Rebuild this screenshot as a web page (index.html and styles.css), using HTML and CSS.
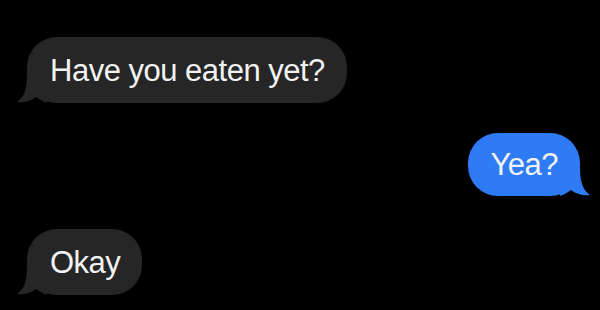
FILE: index.html
```html
<!DOCTYPE html>
<html lang="en">
<head>
    <meta charset="UTF-8">
    <meta name="viewport" content="width=device-width, initial-scale=1.0">
    <title>Messages</title>
    <link rel="stylesheet" href="styles.css">
</head>
<body>
    <div class="thread">
        <div class="bubble received">
            Have you eaten yet?
            <svg class="tail" viewBox="0 0 30 28"><path d="M10,0 C10,14 7,22 0,27 C7,28 14,26 19,22 C23,25 27,27 30,28 L30,0 Z"/></svg>
        </div>
        <div class="bubble sent">
            Yea?
            <svg class="tail" viewBox="0 0 30 28"><path d="M10,0 C10,14 7,22 0,27 C7,28 14,26 19,22 C23,25 27,27 30,28 L30,0 Z"/></svg>
        </div>
        <div class="bubble received last">
            Okay
            <svg class="tail" viewBox="0 0 30 28"><path d="M10,0 C10,14 7,22 0,27 C7,28 14,26 19,22 C23,25 27,27 30,28 L30,0 Z"/></svg>
        </div>
    </div>
</body>
</html>
```
FILE: styles.css
```css
body {
    margin: 0;
    padding: 0;
    background-color: #000;
    font-family: "Liberation Sans", Arial, sans-serif;
    height: 310px;
    overflow: hidden;
}

.thread {
    display: flex;
    flex-direction: column;
    gap: 30px;
    padding: 37px 20px 0 27px;
}

.bubble {
    position: relative;
    height: 66px;
    box-sizing: border-box;
    padding: 1px 22px 0 23px;
    border-radius: 30px;
    display: flex;
    align-items: center;
    font-size: 31px;
    letter-spacing: -0.5px;
    color: #f2f2f2;
}

.received {
    align-self: flex-start;
    background-color: #262626;
}

.sent {
    align-self: flex-end;
    background-color: #2f7bf5;
    height: 63px;
    padding: 0 22px;
}

.last {
    margin-top: 3px;
}

.tail {
    position: absolute;
    bottom: 0;
    width: 30px;
    height: 28px;
}

.received .tail {
    left: -10px;
    fill: #262626;
}

.sent .tail {
    right: -10px;
    fill: #2f7bf5;
    transform: scaleX(-1);
}
```
